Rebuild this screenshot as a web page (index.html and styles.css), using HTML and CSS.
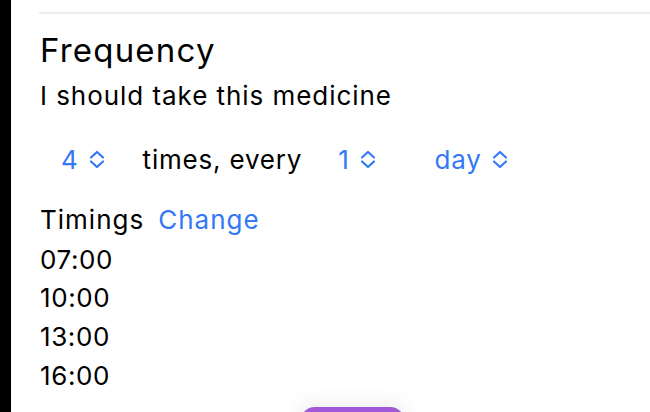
FILE: index.html
```html
<!DOCTYPE html>
<html lang="en">
<head>
<meta charset="utf-8">
<link rel="stylesheet" href="styles.css">
</head>
<body>
<div class="app">
  <div class="rail"></div>
  <div class="main">
    <div class="divider"></div>
    <h1 class="title">Frequency</h1>
    <p class="subtitle">I should take this medicine</p>
    <div class="stepper-row">
      <span class="picker p-count">4
        <svg class="chev" viewBox="0 0 16 19"><path d="M2 7.5 L8 2 L14 7.5 M2 11.5 L8 17 L14 11.5" fill="none" stroke="currentColor" stroke-width="2.2" stroke-linecap="round" stroke-linejoin="round"/></svg>
      </span>
      <span class="label">times, every</span>
      <span class="picker p-interval">1
        <svg class="chev" viewBox="0 0 16 19"><path d="M2 7.5 L8 2 L14 7.5 M2 11.5 L8 17 L14 11.5" fill="none" stroke="currentColor" stroke-width="2.2" stroke-linecap="round" stroke-linejoin="round"/></svg>
      </span>
      <span class="picker p-unit">day
        <svg class="chev" viewBox="0 0 16 19"><path d="M2 7.5 L8 2 L14 7.5 M2 11.5 L8 17 L14 11.5" fill="none" stroke="currentColor" stroke-width="2.2" stroke-linecap="round" stroke-linejoin="round"/></svg>
      </span>
    </div>
    <div class="timings-head">
      <span>Timings</span>
      <span class="link">Change</span>
    </div>
    <ul class="times">
      <li>07:00</li>
      <li>10:00</li>
      <li>13:00</li>
      <li>16:00</li>
    </ul>
  </div>
</div>
<div class="fab-clip"><div class="fab"></div></div>
</body>
</html>
```

FILE: styles.css
```css
html, body {
  margin: 0;
  padding: 0;
}
body {
  width: 650px;
  height: 412px;
  overflow: hidden;
  background: #fff;
  font-family: Inter, "Noto Sans", sans-serif;
  color: #000;
  position: relative;
}
.app {
  display: flex;
  height: 412px;
  overflow: hidden;
}
.rail {
  width: 11px;
  background: #000;
  flex: none;
}
.main {
  flex: 1;
  padding-left: 28px;
  padding-top: 12px;
}
.divider {
  height: 1.5px;
  background: #ececec;
}
.title {
  margin: 16px 0 0 1px;
  font-size: 33px;
  font-weight: 400;
  line-height: 40px;
  letter-spacing: 1.2px;
}
.subtitle {
  margin: 8px 0 0 1px;
  font-size: 26px;
  line-height: 36px;
  letter-spacing: 0.95px;
}
.stepper-row {
  display: flex;
  align-items: center;
  margin-top: 28px;
  height: 36px;
  font-size: 26px;
  line-height: 36px;
  letter-spacing: 0.8px;
}
.picker {
  display: flex;
  align-items: center;
  color: #3478f6;
  gap: 10px;
}
.chev {
  display: block;
  width: 16px;
  height: 19px;
  flex: none;
}
.p-count { margin-left: 22px; }
.label { margin-left: 38px; }
.p-interval { margin-left: 36px; }
.p-unit { margin-left: 59px; }
.timings-head {
  display: flex;
  gap: 14px;
  margin: 22px 0 0 1px;
  font-size: 26px;
  line-height: 39px;
  letter-spacing: 1px;
}
.link {
  color: #3478f6;
}
.times {
  list-style: none;
  margin: 2px 0 0 1px;
  padding: 0;
  font-size: 26px;
  line-height: 38.7px;
  letter-spacing: 0.6px;
}
.fab-clip {
  position: absolute;
  left: 270px;
  top: 372px;
  width: 170px;
  height: 40px;
  overflow: hidden;
}
.fab {
  margin: 35px 0 0 30px;
  width: 105px;
  height: 30px;
  border-radius: 15px;
  background: #a259d9;
  box-shadow: 0 -2px 20px 4px rgba(0, 0, 0, 0.06);
}
```
